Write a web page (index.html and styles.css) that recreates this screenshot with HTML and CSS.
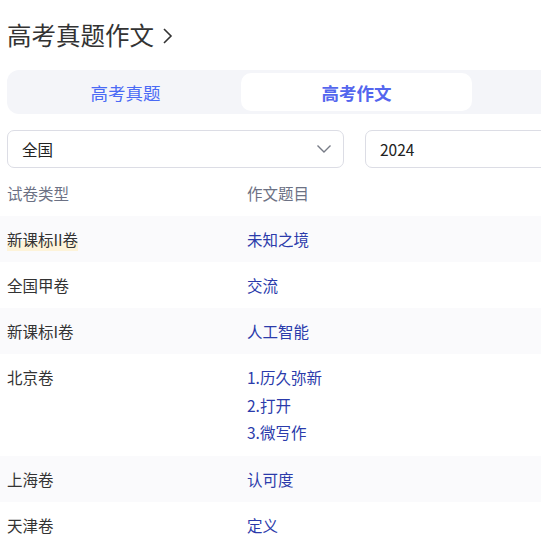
FILE: index.html
```html
<!DOCTYPE html>
<html lang="zh">
<head>
<meta charset="utf-8">
<link rel="stylesheet" href="styles.css">
</head>
<body>
<div class="page">
  <div class="title">
    <span>高考真题作文</span>
    <svg class="title-arrow" width="12" height="18" viewBox="0 0 12 18"><polyline points="3,2 10,9 3,16" fill="none" stroke="#333" stroke-width="1.6"/></svg>
  </div>
  <div class="tabs">
    <div class="tab">高考真题</div>
    <div class="tab active">高考作文</div>
    <div class="tab"></div>
  </div>
  <div class="filters">
    <div class="select">
      <span>全国</span>
      <svg width="16" height="10" viewBox="0 0 16 10"><polyline points="1.5,1.5 8,8 14.5,1.5" fill="none" stroke="#777b86" stroke-width="1.4"/></svg>
    </div>
    <div class="select"><span>2024</span></div>
  </div>
  <div class="table">
    <div class="row head"><div class="c1">试卷类型</div><div class="c2">作文题目</div></div>
    <div class="row stripe"><div class="c1"><span class="hl">新课标II卷</span></div><div class="c2">未知之境</div></div>
    <div class="row"><div class="c1">全国甲卷</div><div class="c2">交流</div></div>
    <div class="row stripe"><div class="c1">新课标I卷</div><div class="c2">人工智能</div></div>
    <div class="row multi"><div class="c1">北京卷</div><div class="c2"><div>1.历久弥新</div><div>2.打开</div><div>3.微写作</div></div></div>
    <div class="row stripe"><div class="c1">上海卷</div><div class="c2">认可度</div></div>
    <div class="row"><div class="c1">天津卷</div><div class="c2">定义</div></div>
  </div>
</div>
</body>
</html>
```
FILE: styles.css
```css
html, body {
  margin: 0;
  padding: 0;
  overflow: hidden;
  background: #fff;
}
body {
  font-family: "Noto Sans CJK SC", "Noto Sans", sans-serif;
  color: #333;
}
.page {
  width: 720px;
}
.title {
  display: flex;
  align-items: center;
  gap: 7px;
  padding: 15px 7px 0 7px;
  height: 40px;
  font-size: 24.5px;
  color: #333;
}
.title span { line-height: 36px; }
.title-arrow { margin-top: 1px; }
.tabs {
  margin: 15px 0 0 7px;
  height: 44px;
  box-sizing: border-box;
  padding: 3px;
  background: #f4f5f9;
  border-radius: 12px;
  display: grid;
  grid-template-columns: 231px 231px 231px;
}
.tab {
  display: flex;
  align-items: center;
  justify-content: center;
  font-size: 17.5px;
  color: #4a6af5;
  border-radius: 10px;
}
.tab.active {
  background: #fff;
  font-weight: bold;
  color: #5466ee;
}
.filters {
  display: flex;
  gap: 21px;
  margin: 16px 0 0 7px;
}
.select {
  width: 337px;
  height: 38px;
  box-sizing: border-box;
  border: 1px solid #dcdde5;
  border-radius: 7px;
  display: flex;
  align-items: center;
  justify-content: space-between;
  padding: 0 11px 0 14px;
  font-size: 15.5px;
  color: #222;
}
.table {
  margin-top: 2px;
}
.row {
  display: flex;
  padding: 10px 0;
  font-size: 15.5px;
  line-height: 26px;
}
.row.multi { line-height: 27.5px; padding: 10px 0 9px; }
.row.stripe { background: #fafafc; }
.c1 {
  width: 233px;
  padding-left: 7px;
  color: #333;
}
.c2 {
  padding-left: 7px;
  color: #2b3bab;
}
.head .c1, .head .c2 { color: #6c7184; }
.hl { background: linear-gradient(to bottom, transparent 55%, #fdf3d9 55%); padding-bottom: 1px; }
```
